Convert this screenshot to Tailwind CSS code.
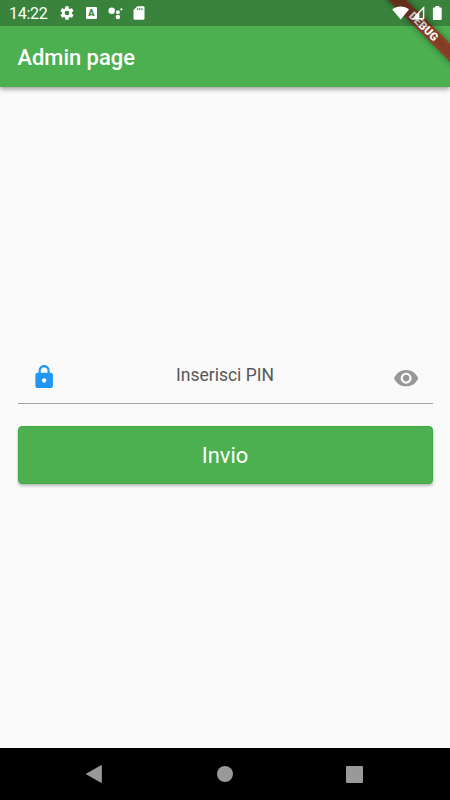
<!DOCTYPE html>
<html lang="it">

<head>
  <meta charset="UTF-8">
  <meta name="viewport" content="width=device-width, initial-scale=1.0">
  <title>Admin page</title>
  <script src="https://cdn.jsdelivr.net/npm/@tailwindcss/browser@4"></script>
</head>

<body class="relative flex h-screen flex-col overflow-hidden bg-[#fafafa] font-[Roboto,sans-serif]">

  <!-- Header -->
  <header class="relative h-[87px] shrink-0 bg-[#4caf50] shadow-[0_2px_5px_rgba(0,0,0,0.4)]">
    <!-- Debug banner -->
    <svg class="absolute top-0 right-0" width="80" height="87" viewBox="0 0 80 87">
      <defs>
        <filter id="soft" x="-20%" y="-100%" width="140%" height="300%">
          <feGaussianBlur stdDeviation="3" />
        </filter>
      </defs>
      <g transform="translate(80 0) rotate(45)">
        <rect x="-50" y="30.7" width="100" height="13.1" fill="#000" fill-opacity=".38" filter="url(#soft)" />
        <rect x="-50" y="30.7" width="100" height="13.1" fill="#b71c1c" fill-opacity=".63" />
        <text x="0" y="41.2" text-anchor="middle" font-size="11.2" font-weight="900" fill="#fff">DEBUG</text>
      </g>
    </svg>

    <!-- Status bar -->
    <div class="relative flex h-[26px] items-center bg-black/25 pl-[9px] text-white">
      <span class="w-[50px] text-[16px] leading-[26px] tracking-[-0.3px] pt-[2px]">14:22</span>
      <svg width="16" height="16" viewBox="0 0 24 24" fill="currentColor">
        <path d="M19.43 12.98c.04-.32.07-.64.07-.98s-.03-.66-.07-.98l2.11-1.65c.19-.15.24-.42.12-.64l-2-3.46c-.12-.22-.39-.3-.61-.22l-2.49 1c-.52-.4-1.08-.73-1.69-.98l-.38-2.65A.49.49 0 0 0 14 2h-4c-.25 0-.46.18-.49.42l-.38 2.65c-.61.25-1.17.59-1.69.98l-2.49-1c-.23-.09-.49 0-.61.22l-2 3.46c-.13.22-.07.49.12.64l2.11 1.65c-.04.32-.07.65-.07.98s.03.66.07.98l-2.11 1.65c-.19.15-.24.42-.12.64l2 3.46c.12.22.39.3.61.22l2.49-1c.52.4 1.08.73 1.69.98l.38 2.65c.03.24.24.42.49.42h4c.25 0 .46-.18.49-.42l.38-2.65c.61-.25 1.17-.59 1.69-.98l2.49 1c.23.09.49 0 .61-.22l2-3.46c.12-.22.07-.49-.12-.64zM12 15.5a3.5 3.5 0 1 1 0-7 3.5 3.5 0 0 1 0 7z" />
      </svg>
      <span class="ml-[11px] flex h-[11.5px] w-[10.5px] items-center justify-center rounded-[1px] bg-white text-[9px] leading-none font-black text-[#3a853d]">A</span>
      <svg class="ml-[11px]" width="16" height="16" viewBox="0 0 16 16" fill="currentColor">
        <circle cx="3.700" cy="5.8" r="3.2" />
        <circle cx="9.900" cy="7.2" r="1.9" />
        <circle cx="9.900" cy="12" r="2.2" />
        <circle cx="13.400" cy="4.3" r="1.1" />
      </svg>
      <svg class="ml-[9px]" width="12" height="14" viewBox="0 0 12 14">
        <path d="M4.4.3h5.8c.8 0 1.3.5 1.3 1.2v11c0 .7-.5 1.2-1.3 1.2H1.8c-.8 0-1.3-.5-1.3-1.2V4z" fill="#fff" />
        <path d="M4.7 2v2.2M6.8 2v2.2M8.9 2v2.2" stroke="#3a853d" stroke-width="1" />
      </svg>
      <div class="ml-auto flex items-center pr-[8px]">
        <svg width="18" height="14" viewBox="0 0 18 14" fill="currentColor">
          <path d="M9.700 13.500 1.300 3.400C3.600 1.600 6.600.4 9.700.4s6 1.200 8.300 3z" />
        </svg>
        <svg class="ml-[2px]" width="14" height="14" viewBox="0 0 14 14">
          <path d="M13.300 0V13.600H.4z" fill="#fff" />
          <path d="M11.900 3.400v8.600H8.300V7z" fill="#4f6038" />
        </svg>
        <svg class="ml-[7px]" width="10" height="14" viewBox="0 0 10 14" fill="currentColor">
          <path d="M3.300 0h4v1.400h1.500q.9 0 .9.900v10.800q0 .9-.9.900h-7q-.9 0-.9-.9V2.300q0-.9.900-.9H3.300z" />
        </svg>
      </div>
    </div>

    <h1 class="relative pl-[17.5px] text-[21.9px] leading-[64px] font-medium text-white">Admin page</h1>
  </header>

  <!-- PIN form -->
  <main class="flex flex-1 flex-col px-[17.5px] pt-[264px]">
    <div class="flex h-[53px] items-start justify-between border-b border-[#a3a3a3] px-[13px] pt-[13px]">
      <svg width="26.3" height="26.3" viewBox="0 0 24 24" fill="#2196f3">
        <path d="M18 8h-1V6c0-2.760-2.240-5-5-5S7 3.240 7 6v2H6c-1.100 0-2 .9-2 2v10c0 1.100.9 2 2 2h12c1.100 0 2-.9 2-2V10c0-1.100-.9-2-2-2zm-6 9c-1.100 0-2-.9-2-2s.9-2 2-2 2 .9 2 2-.9 2-2 2zm3.100-9H8.900V6c0-1.710 1.390-3.100 3.100-3.100s3.100 1.390 3.100 3.100z" />
      </svg>
      <span class="text-[17.5px] leading-[22px] text-[#585858]">Inserisci PIN</span>
      <svg class="mt-[0.5px]" width="26.3" height="26.3" viewBox="0 0 24 24" fill="#979797">
        <path d="M12 4.500C7 4.500 2.730 7.610 1 12c1.730 4.390 6 7.500 11 7.500s9.270-3.110 11-7.500c-1.730-4.390-6-7.500-11-7.500zM12 17c-2.760 0-5-2.240-5-5s2.240-5 5-5 5 2.240 5 5-2.240 5-5 5zm0-8c-1.660 0-3 1.340-3 3s1.340 3 3 3 3-1.340 3-3-1.340-3-3-3z" />
      </svg>
    </div>
    <button class="mt-[22px] h-[57.5px] rounded-[4px] border border-[#3bac40] bg-[#4caf50] pt-[3px] text-[21.9px] text-white shadow-[0_2px_3px_rgba(0,0,0,0.25)]">Invio</button>
  </main>

  <!-- Navigation bar -->
  <nav class="flex h-[52px] shrink-0 items-center justify-between bg-black pr-[87px] pl-[86px]">
    <svg width="17" height="18" viewBox="0 0 17 18" fill="#999">
      <path d="M15 .2q.9-.3.900.6v16.400q0 .9-.9.600L.4 9.500q-.6-.5 0-1z" />
    </svg>
    <span class="size-4 rounded-full bg-[#999]"></span>
    <span class="size-[17px] rounded-[1px] bg-[#999]"></span>
  </nav>

</body>

</html>
